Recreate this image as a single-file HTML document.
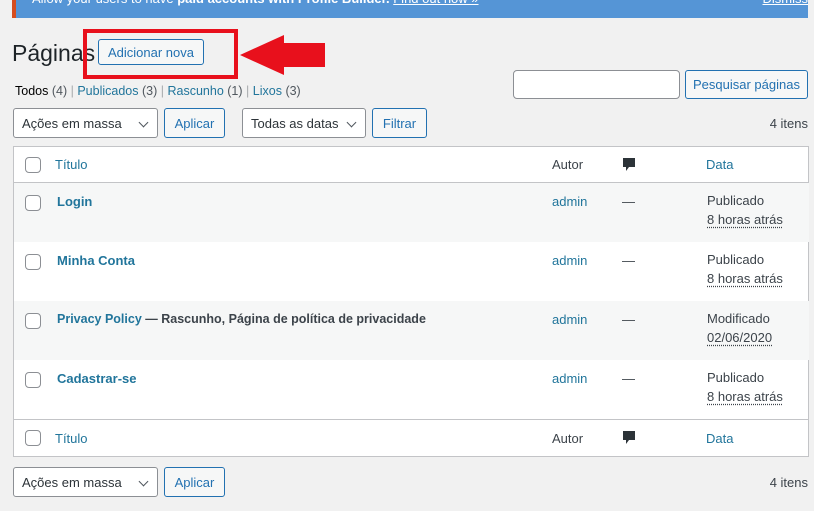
<!DOCTYPE html>
<html><head><meta charset="utf-8"><style>
*{box-sizing:border-box;margin:0;padding:0}
body{width:814px;height:511px;overflow:hidden;background:#f1f1f1;font-family:"Liberation Sans",sans-serif;font-size:13px;color:#3c434a;position:relative}
.a{position:absolute}
a{color:#21759b;text-decoration:none}
.btn{position:absolute;border:1px solid #2271b1;color:#2271b1;background:#f6f7f7;border-radius:3px;font-size:13px;display:flex;align-items:center;justify-content:center}
.sel{position:absolute;border:1px solid #8c8f94;background:#fff;border-radius:3px;font-size:13px;color:#2c3338;padding-left:8px;display:flex;align-items:center}
.sel:after{content:"";position:absolute;right:10px;top:10px;width:6px;height:6px;border-right:1.5px solid #50575e;border-bottom:1.5px solid #50575e;transform:rotate(45deg)}
.cb{position:absolute;left:11px;width:16px;height:16px;border:1px solid #8c8f94;border-radius:4px;background:#fff}
.row{position:absolute;left:0;width:795px;height:59px}
.t{position:absolute;left:43px;top:11px;font-weight:bold;font-size:13px}
.au{position:absolute;left:538px;top:11px}
.da{position:absolute;left:608px;top:11px}
.dt{position:absolute;left:693px;top:8px;line-height:19px}
.dt u{text-decoration:underline dotted;text-underline-offset:3px}
</style></head><body>
<div class="a" style="left:12px;top:0;width:796px;height:18px;background:#5595d6;border-left:4px solid #d54e21;color:#fff;overflow:hidden">
<div class="a" style="left:16px;top:-9px;font-size:13px">Allow your users to have <b>paid accounts with Profile Builder.</b> <u>Find out now »</u></div>
<div class="a" style="right:0;top:-9px"><u>Dismiss</u></div></div>
<div class="a" style="left:12px;top:40px;font-size:23px;color:#1d2327">Páginas</div>
<div class="btn" style="left:98px;top:39px;width:106px;height:26px">Adicionar nova</div>
<div class="a" style="left:83px;top:29px;width:155px;height:50px;border:4px solid #e8101c"></div>
<svg class="a" style="left:238px;top:33px" width="90" height="46"><polygon points="2,22 46,2 46,10 87,10 87,34 46,34 46,42" fill="#e8101c"/></svg>
<div class="a" style="left:15px;top:84px;font-size:12.5px"><b style="color:#000;font-weight:normal">Todos</b> <span style="color:#50575e">(4)</span> <span style="color:#a7aaad">|</span> <a>Publicados</a> <span style="color:#50575e">(3)</span> <span style="color:#a7aaad">|</span> <a>Rascunho</a> <span style="color:#50575e">(1)</span> <span style="color:#a7aaad">|</span> <a>Lixos</a> <span style="color:#50575e">(3)</span></div>
<div class="a" style="left:513px;top:70px;width:167px;height:29px;background:#fff;border:1px solid #8c8f94;border-radius:4px"></div>
<div class="btn" style="left:685px;top:70px;width:123px;height:29px">Pesquisar páginas</div>
<div class="sel" style="left:13px;top:108px;width:145px;height:30px">Ações em massa</div>
<div class="btn" style="left:164px;top:108px;width:61px;height:30px">Aplicar</div>
<div class="sel" style="left:242px;top:108px;width:124px;height:30px">Todas as datas</div>
<div class="btn" style="left:372px;top:108px;width:55px;height:30px">Filtrar</div>
<div class="a" style="right:6px;top:116px">4 itens</div>
<div class="a" style="left:13px;top:146px;width:796px;height:311px;background:#fff;border:1px solid #c3c4c7">
<div class="row" style="top:0;height:36px;border-bottom:1px solid #c3c4c7"><div class="cb" style="top:10px"></div><a class="a" style="left:41px;top:10px">Título</a><div class="a" style="left:538px;top:10px">Autor</div>
<svg class="a" style="left:608px;top:10px" width="14" height="16"><path d="M1 1h12v9H7l-3 4v-4H1z" fill="#2c3338"/></svg><a class="a" style="left:692px;top:10px">Data</a></div>
<div class="row" style="top:36px;background:#f6f7f7"><div class="cb" style="top:12px"></div><a class="t">Login</a><a class="au">admin</a><div class="da">—</div><div class="dt">Publicado<br><u>8 horas atrás</u></div></div>
<div class="row" style="top:95px"><div class="cb" style="top:12px"></div><a class="t">Minha Conta</a><a class="au">admin</a><div class="da">—</div><div class="dt">Publicado<br><u>8 horas atrás</u></div></div>
<div class="row" style="top:154px;background:#f6f7f7"><div class="cb" style="top:12px"></div><div class="t" style="font-size:12.5px"><a>Privacy Policy</a> <span style="color:#3c434a">— Rascunho, Página de política de privacidade</span></div><a class="au">admin</a><div class="da">—</div><div class="dt">Modificado<br><u>02/06/2020</u></div></div>
<div class="row" style="top:213px"><div class="cb" style="top:12px"></div><a class="t">Cadastrar-se</a><a class="au">admin</a><div class="da">—</div><div class="dt">Publicado<br><u>8 horas atrás</u></div></div>
<div class="row" style="top:272px;height:37px;border-top:1px solid #c3c4c7"><div class="cb" style="top:10px"></div><a class="a" style="left:41px;top:11px">Título</a><div class="a" style="left:538px;top:11px">Autor</div>
<svg class="a" style="left:608px;top:10px" width="14" height="16"><path d="M1 1h12v9H7l-3 4v-4H1z" fill="#2c3338"/></svg><a class="a" style="left:692px;top:11px">Data</a></div>
</div>
<div class="sel" style="left:13px;top:467px;width:145px;height:30px">Ações em massa</div>
<div class="btn" style="left:164px;top:467px;width:61px;height:30px">Aplicar</div>
<div class="a" style="right:6px;top:475px">4 itens</div>
</body></html>
